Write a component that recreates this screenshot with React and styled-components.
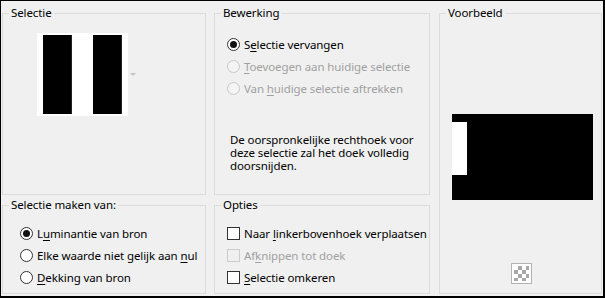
import styled, { createGlobalStyle } from 'styled-components';

const GlobalStyle = createGlobalStyle`
  html, body {
    margin: 0;
    padding: 0;
    background: #f0f0f0;
  }
  body {
    font-family: "Noto Sans", "Open Sans", sans-serif;
    font-size: 11.5px;
    letter-spacing: -0.1px;
    color: #000;
  }
`;

const Window = styled.div`
  width: 605px;
  height: 298px;
  box-sizing: border-box;
  border-style: solid;
  border-color: #000;
  border-width: 1px 2px 2px 1px;
  background: #f0f0f0;
  display: grid;
  grid-template-columns: 204px 216px 164px;
  grid-template-rows: 182px 89px;
  column-gap: 8px;
  row-gap: 10px;
  padding: 12px 0 0 1px;
`;

const Group = styled.div`
  position: relative;
  border: 1px solid #dcdcdc;
  grid-column: ${(p) => p.$col};
  grid-row: ${(p) => p.$row};
  margin-left: ${(p) => p.$shift || 0}px;
  display: flex;
  flex-direction: column;
  padding: ${(p) => p.$pad || '0'};
`;

const Title = styled.span`
  position: absolute;
  top: -9px;
  left: 6px;
  padding: 0 2px;
  background: #f0f0f0;
  line-height: 16px;
  white-space: nowrap;
`;

const PickerRow = styled.div`
  display: flex;
  align-items: center;
`;

const Thumb = styled.div`
  width: 91px;
  height: 83px;
  background: #fff;
  box-sizing: border-box;
  padding: 2px 6px;
  display: flex;
  justify-content: space-between;
`;

const Bar = styled.div`
  width: 29px;
  height: 79px;
  background: #000;
  box-shadow: inset -1px 0 0 #222;
`;

const Arrow = styled.span`
  margin-left: 2px;
  width: 0;
  height: 0;
  border-left: 3px solid transparent;
  border-right: 3px solid transparent;
  border-top: 3px solid #c4c4c4;
`;

const Row = styled.label`
  display: flex;
  align-items: center;
  height: 22px;
  white-space: nowrap;
  color: ${(p) => (p.$disabled ? '#a0a0a0' : '#000')};
  u {
    text-decoration-thickness: 1px;
    text-underline-offset: 2px;
  }
`;

const Radio = styled.span`
  position: relative;
  flex: none;
  width: 13px;
  height: 13px;
  box-sizing: border-box;
  border-radius: 50%;
  border: 1px solid ${(p) => (p.$disabled ? '#c6c6c6' : '#333')};
  background: ${(p) => (p.$disabled ? '#f4f4f4' : '#fff')};
  margin-right: 4px;
  &::after {
    content: '';
    display: ${(p) => (p.$checked ? 'block' : 'none')};
    position: absolute;
    left: 2px;
    top: 2px;
    width: 7px;
    height: 7px;
    border-radius: 50%;
    background: #111;
  }
`;

const Check = styled.span`
  flex: none;
  width: 13px;
  height: 13px;
  box-sizing: border-box;
  border: 1px solid ${(p) => (p.$disabled ? '#cccccc' : '#333')};
  background: ${(p) => (p.$disabled ? '#f0f0f0' : '#fff')};
  margin-right: 4px;
`;

const Note = styled.p`
  margin: 34px 0 0 3px;
  line-height: 13px;
  width: 192px;
`;

const Preview = styled.div`
  margin: 100px 0 0 12px;
  width: 141px;
  height: 86px;
  background: #000;
  display: flex;
  flex-direction: column;
`;

const PreviewHole = styled.div`
  margin-top: 8px;
  width: 15px;
  height: 53px;
  background: #fff;
`;

const Checker = styled.div`
  margin-top: 63px;
  align-self: center;
  margin-left: 2px;
  width: 21px;
  height: 21px;
  box-sizing: border-box;
  border: 1px solid #b4b4b4;
  padding: 2px;
  background: #fff;
  &::before {
    content: '';
    display: block;
    width: 15px;
    height: 15px;
    background-color: #fff;
    background-image: conic-gradient(#a8a8a8 25%, #fff 0 50%, #a8a8a8 0 75%, #fff 0);
    background-size: 8px 8px;
  }
`;

const RadioRow = ({ checked, disabled, children }) => (
  <Row $disabled={disabled}>
    <Radio $checked={checked} $disabled={disabled} />
    <span>{children}</span>
  </Row>
);

const CheckRow = ({ disabled, children }) => (
  <Row $disabled={disabled}>
    <Check $disabled={disabled} />
    <span>{children}</span>
  </Row>
);

export default function App() {
  return (
    <>
      <GlobalStyle />
      <Window>
        <Group $col="1" $row="1" $pad="19px 0 0 34px">
          <Title>Selectie</Title>
          <PickerRow>
            <Thumb>
              <Bar />
              <Bar />
            </Thumb>
            <Arrow />
          </PickerRow>
        </Group>

        <Group $col="2" $row="1" $pad="19px 0 0 12px">
          <Title>Bewerking</Title>
          <RadioRow checked>
            S<u>e</u>lectie vervangen
          </RadioRow>
          <RadioRow disabled>
            <u>T</u>oevoegen aan huidige selectie
          </RadioRow>
          <RadioRow disabled>
            Van <u>h</u>uidige selectie aftrekken
          </RadioRow>
          <Note>
            De oorspronkelijke rechthoek voor deze selectie zal het doek volledig
            doorsnijden.
          </Note>
        </Group>

        <Group $col="3" $row="1 / span 2" $shift={1}>
          <Title>Voorbeeld</Title>
          <Preview>
            <PreviewHole />
          </Preview>
          <Checker />
        </Group>

        <Group $col="1" $row="2" $pad="16px 0 0 17px">
          <Title>Selectie maken van:</Title>
          <RadioRow checked>
            L<u>u</u>minantie van bron
          </RadioRow>
          <RadioRow>
            Elke waarde niet gelijk aan <u>n</u>ul
          </RadioRow>
          <RadioRow>
            <u>D</u>ekking van bron
          </RadioRow>
        </Group>

        <Group $col="2" $row="2" $pad="16px 0 0 12px">
          <Title>Opties</Title>
          <CheckRow>
            Naar <u>l</u>inkerbovenhoek verplaatsen
          </CheckRow>
          <CheckRow disabled>
            Af<u>k</u>nippen tot doek
          </CheckRow>
          <CheckRow>
            <u>S</u>electie omkeren
          </CheckRow>
        </Group>
      </Window>
    </>
  );
}
